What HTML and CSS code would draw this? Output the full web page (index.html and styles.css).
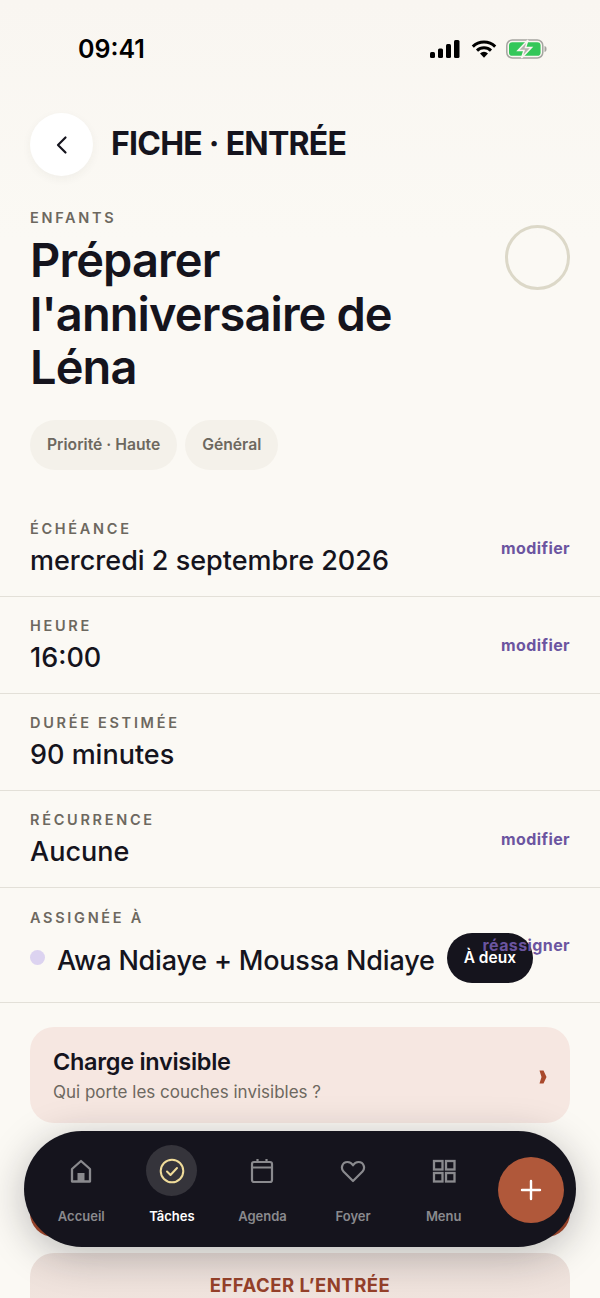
FILE: index.html
```html
<!DOCTYPE html>
<html lang="fr">

<head>
  <meta charset="UTF-8" />
  <meta name="viewport" content="width=device-width, initial-scale=1.0" />
  <title>Fiche entrée</title>
  <link rel="stylesheet" href="styles.css">
</head>

<body>
  <div class="phone">
    <!-- Status bar -->
    <div class="status-bar">
      <span class="time">09:41</span>
      <div class="status-icons">
        <svg width="30" height="20" viewBox="0 0 30 20">
          <rect x="0" y="13" width="5" height="6" rx="1.5" fill="#000" />
          <rect x="8" y="9.5" width="5" height="9.5" rx="1.5" fill="#000" />
          <rect x="16" y="5" width="5" height="14" rx="1.5" fill="#000" />
          <rect x="24" y="1" width="5.500" height="18" rx="1.5" fill="#000" />
        </svg>
        <svg class="wifi" width="26" height="20" viewBox="0 0 26 20">
          <path d="M1.800 7.600a16 16 0 0 1 22.400 0M6 11.600a10 10 0 0 1 14 0" fill="none" stroke="#000" stroke-width="3" />
          <path d="M9 14.400a6 6 0 0 1 8 0L13 18.800z" fill="#000" />
        </svg>
        <svg width="41" height="20" viewBox="0 0 41 20">
          <rect x="0.800" y="1" width="36" height="18" rx="5.500" fill="none" stroke="#a5a5a0" stroke-width="1.500" />
          <rect x="3" y="3.200" width="31.600" height="13.600" rx="3.400" fill="#34c759" />
          <path d="M38.500 7c1.600.4 2 1.500 2 3s-.4 2.600-2 3z" fill="#a5a5a0" />
          <path d="M22 1 12 11.500h6l-2.500 7.500 10-10.500h-6z" fill="#b4b4ae" stroke="#f9f6f1" stroke-width="1.500" />
        </svg>
      </div>
    </div>

    <!-- Header -->
    <header class="top-bar">
      <a href="#" class="back-button">
        <svg width="24" height="24" viewBox="0 0 24 24">
          <path d="M15.500 4.500 8 12l7.500 7.500" fill="none" stroke="#15141d" stroke-width="2.200" stroke-linecap="round" stroke-linejoin="round" />
        </svg>
      </a>
      <h2>FICHE · ENTRÉE</h2>
    </header>

    <!-- Title block -->
    <section class="intro">
      <div class="intro-text">
        <div class="label">ENFANTS</div>
        <h1>Préparer l'anniversaire de Léna</h1>
      </div>
      <div class="check-circle"></div>
    </section>

    <div class="chips">
      <span class="chip">Priorité · Haute</span>
      <span class="chip">Général</span>
    </div>

    <!-- Detail rows -->
    <div class="rows">
      <div class="row">
        <div class="row-main">
          <div class="label">ÉCHÉANCE</div>
          <div class="value">mercredi 2 septembre 2026</div>
        </div>
        <a href="#" class="action">modifier</a>
      </div>
      <div class="row">
        <div class="row-main">
          <div class="label">HEURE</div>
          <div class="value">16:00</div>
        </div>
        <a href="#" class="action">modifier</a>
      </div>
      <div class="row">
        <div class="row-main">
          <div class="label">DURÉE ESTIMÉE</div>
          <div class="value">90 minutes</div>
        </div>
      </div>
      <div class="row">
        <div class="row-main">
          <div class="label">RÉCURRENCE</div>
          <div class="value">Aucune</div>
        </div>
        <a href="#" class="action">modifier</a>
      </div>
      <div class="row row-assign">
        <div class="row-main">
          <div class="label">ASSIGNÉE À</div>
          <div class="assignee">
            <span class="dot"></span>
            <span class="value">Awa Ndiaye + Moussa Ndiaye</span>
            <span class="pill">À deux</span>
          </div>
        </div>
        <a href="#" class="action">réassigner</a>
      </div>
    </div>

    <!-- Invisible load card -->
    <a href="#" class="load-card">
      <div>
        <div class="load-title">Charge invisible</div>
        <div class="load-sub">Qui porte les couches invisibles ?</div>
      </div>
      <svg class="load-arrow" width="10" height="16" viewBox="0 0 10 16">
        <path d="M1.500 1.500h4l3 6.500-3 6.500h-4L3.500 8z" fill="#a9492c" />
      </svg>
    </a>

    <a href="#" class="primary-button"></a>
    <a href="#" class="clear-button">EFFACER L’ENTRÉE</a>

    <!-- Bottom nav -->
    <nav class="tab-bar">
      <a href="#" class="tab">
        <span class="tab-icon">
          <svg width="24" height="24" viewBox="0 0 24 24">
            <path d="M3 22.500V10L12 2l9 8v12.500z" fill="none" stroke="#8a8a8e" stroke-width="2.300" stroke-linejoin="round" />
            <rect x="8.500" y="14" width="7" height="8" fill="#8a8a8e" />
          </svg>
        </span>
        Accueil
      </a>
      <a href="#" class="tab tab-active">
        <span class="tab-icon">
          <svg width="26" height="26" viewBox="0 0 26 26">
            <circle cx="13" cy="13" r="11.300" fill="none" stroke="#f0dc9a" stroke-width="2" />
            <path d="M8 13.500l3.500 3.500 6.500-7" fill="none" stroke="#f0dc9a" stroke-width="2" stroke-linecap="round" stroke-linejoin="round" />
          </svg>
        </span>
        Tâches
      </a>
      <a href="#" class="tab">
        <span class="tab-icon">
          <svg width="24" height="26" viewBox="0 0 24 26">
            <rect x="2" y="4" width="20" height="20" rx="2" fill="none" stroke="#8a8a8e" stroke-width="2.200" />
            <path d="M2 9.500h20M7.500 1v4M16.500 1v4" fill="none" stroke="#8a8a8e" stroke-width="2.200" />
          </svg>
        </span>
        Agenda
      </a>
      <a href="#" class="tab">
        <span class="tab-icon">
          <svg width="26" height="24" viewBox="0 0 26 24">
            <path d="M13 22 3.500 12.500C.5 9.500 2 3 7.500 3c2.500 0 4.300 1.300 5.500 3.300C14.200 4.300 16 3 18.500 3 24 3 25.500 9.500 22.500 12.500z" fill="none" stroke="#8a8a8e" stroke-width="2.200" stroke-linejoin="round" />
          </svg>
        </span>
        Foyer
      </a>
      <a href="#" class="tab">
        <span class="tab-icon">
          <svg width="24" height="24" viewBox="0 0 24 24">
            <rect x="2" y="2" width="8.500" height="8.500" fill="none" stroke="#8a8a8e" stroke-width="2.300" />
            <rect x="14" y="2" width="8.500" height="8.500" fill="none" stroke="#8a8a8e" stroke-width="2.300" />
            <rect x="2" y="14" width="8.500" height="8.500" fill="none" stroke="#8a8a8e" stroke-width="2.300" />
            <rect x="14" y="14" width="8.500" height="8.500" fill="none" stroke="#8a8a8e" stroke-width="2.300" />
          </svg>
        </span>
        Menu
      </a>
      <a href="#" class="fab">
        <svg width="22" height="22" viewBox="0 0 22 22">
          <path d="M11 2v18M2 11h18" fill="none" stroke="#fff" stroke-width="2.400" stroke-linecap="round" />
        </svg>
      </a>
    </nav>
  </div>
</body>

</html>
```

FILE: styles.css
```css
/* General Styles */
* {
  box-sizing: border-box;
}

body {
  font-family: Inter, "Liberation Sans", sans-serif;
  margin: 0;
  padding: 0;
  background-color: #fbf9f4;
  color: #15141d;
}

a {
  text-decoration: none;
}

.phone {
  position: relative;
  width: 600px;
  height: 1298px;
  overflow: hidden;
  background: linear-gradient(#f9f6f1 0, #fbf9f4 240px);
}

/* Status bar */
.status-bar {
  display: flex;
  justify-content: space-between;
  align-items: center;
  height: 97px;
  padding: 0 53px 0 78px;
}

.time {
  font-size: 25px;
  font-weight: 600;
  color: #000;
}

.status-icons {
  display: flex;
  align-items: center;
  gap: 9px;
}

.wifi {
  margin-left: 2px;
}

/* Header */
.top-bar {
  display: flex;
  align-items: center;
  gap: 18px;
  height: 63px;
  margin-top: 16px;
  padding: 0 30px;
}

.back-button {
  display: flex;
  align-items: center;
  justify-content: center;
  width: 63px;
  height: 63px;
  border-radius: 50%;
  background-color: #fff;
  box-shadow: 0 3px 10px rgba(60, 50, 30, 0.05);
}

h2 {
  margin: 0 0 3px;
  font-size: 32px;
  font-weight: 700;
  letter-spacing: -0.75px;
}

/* Title block */
.intro {
  display: flex;
  justify-content: space-between;
  align-items: flex-start;
  margin-top: 33px;
  padding: 0 30px;
}

.intro-text {
  width: 400px;
}

.label {
  font-size: 14.500px;
  line-height: 18px;
  font-weight: 600;
  letter-spacing: 2.700px;
  color: #6d685f;
}

h1 {
  margin: 6px 0 0;
  font-size: 47px;
  line-height: 53.500px;
  font-weight: 600;
  letter-spacing: -0.9px;
}

.check-circle {
  width: 65px;
  height: 65px;
  margin-top: 16px;
  border: 3px solid #dcd8c8;
  border-radius: 50%;
}

.chips {
  display: flex;
  gap: 8px;
  margin-top: 26px;
  padding: 0 30px;
}

.chip {
  display: flex;
  align-items: center;
  height: 50px;
  padding: 0 17px;
  border-radius: 25px;
  background-color: #f4f1ea;
  font-size: 15.700px;
  font-weight: 600;
  color: #6d685f;
}

/* Detail rows */
.rows {
  margin-top: 30px;
}

.row {
  display: flex;
  align-items: center;
  height: 97px;
  padding: 0 30px;
  border-bottom: 1px solid #e3e0d8;
}

.row-main {
  flex: 1;
  min-width: 0;
  padding-top: 2px;
}

.value {
  margin-top: 6px;
  font-size: 27px;
  line-height: 34px;
  font-weight: 530;
  white-space: nowrap;
}

.action {
  position: relative;
  font-size: 16px;
  font-weight: 700;
  letter-spacing: 0.4px;
  color: #6b55a0;
}

.row-assign {
  height: 115px;
}

.assignee {
  display: flex;
  align-items: center;
  gap: 12px;
  margin-top: 6px;
}

.assignee .value {
  letter-spacing: -0.2px;
}

.dot {
  flex: none;
  width: 15px;
  height: 15px;
  border-radius: 50%;
  background-color: #dcd3f0;
}

.pill {
  display: flex;
  align-items: center;
  flex: none;
  height: 50px;
  padding: 0 17px;
  border-radius: 25px;
  background-color: #15141d;
  color: #fff;
  font-size: 15.500px;
  font-weight: 600;
}

/* Invisible load card */
.load-card {
  display: flex;
  justify-content: space-between;
  align-items: center;
  height: 96px;
  margin: 24px 30px 0;
  padding: 0 22px 0 23px;
  border-radius: 24px;
  background-color: #f6e7e1;
  color: #15141d;
}

.load-arrow {
  margin-top: 4px;
}

.load-title {
  font-size: 23.500px;
  font-weight: 600;
  letter-spacing: -0.3px;
}

.load-sub {
  margin-top: 6px;
  font-size: 17px;
  color: #6d685f;
}

.primary-button {
  display: block;
  height: 86px;
  margin: 28px 30px 0;
  border-radius: 24px;
  background-color: #a9492c;
}

.clear-button {
  display: block;
  height: 86px;
  margin: 16px 30px 0;
  padding-top: 21px;
  border-radius: 24px;
  background: linear-gradient(#ebdfd9, #f1e4de 46px);
  color: #96412a;
  font-size: 18.500px;
  font-weight: 700;
  letter-spacing: 0.5px;
  text-align: center;
}

/* Bottom nav */
.tab-bar {
  position: absolute;
  left: 24px;
  top: 1131px;
  display: flex;
  width: 552px;
  height: 116px;
  padding: 14px 87px 0 12px;
  border-radius: 58px;
  background-color: #15141d;
  box-shadow: 0 8px 40px rgba(21, 20, 29, 0.28);
}

.tab {
  display: flex;
  flex: 1;
  flex-direction: column;
  align-items: center;
  gap: 12px;
  font-size: 13px;
  font-weight: 600;
  color: #8a8a8e;
}

.tab-icon {
  display: flex;
  align-items: center;
  justify-content: center;
  width: 51px;
  height: 51px;
  border-radius: 50%;
}

.tab-active {
  color: #fff;
}

.tab-active .tab-icon {
  background-color: #35343b;
}

.fab {
  position: absolute;
  top: 26px;
  right: 12px;
  display: flex;
  align-items: center;
  justify-content: center;
  width: 66px;
  height: 66px;
  border-radius: 50%;
  background-color: #b0583a;
}
```
